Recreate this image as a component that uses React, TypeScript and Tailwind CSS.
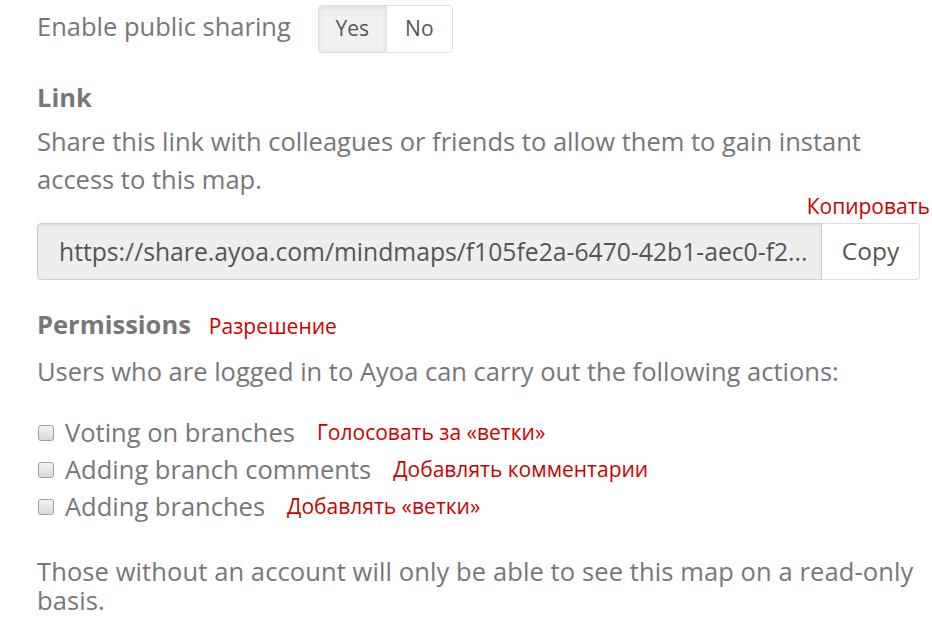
export default function App() {
  const perms = [
    { label: 'Voting on branches', note: 'Голосовать за «ветки»' },
    { label: 'Adding branch comments', note: 'Добавлять комментарии' },
    { label: 'Adding branches', note: 'Добавлять «ветки»' },
  ];

  return (
    <div className="w-[932px] h-[633px] bg-white overflow-hidden text-[#777777] font-['Open_Sans',sans-serif]">
      <div className="pl-[37px] pr-3">
        {/* public sharing toggle */}
        <div className="flex items-center gap-[27px] pt-[5px]">
          <span className="text-[25.5px] leading-none -mt-[4px]">Enable public sharing</span>
          <div className="flex h-[48px] border border-[#dddddd] rounded-[4px] overflow-hidden text-[21px] text-[#555555]">
            <button className="w-[68px] bg-[#f0f0f0] shadow-[inset_0_2px_4px_rgba(0,0,0,0.08)] border-r border-[#e4e4e4]">Yes</button>
            <button className="w-[65px] bg-white">No</button>
          </div>
        </div>

        {/* link */}
        <h3 className="mt-[28px] text-[25.5px] font-bold leading-[32px]">Link</h3>
        <p className="mt-[9px] text-[25.5px] leading-[38px]">
          Share this link with colleagues or friends to allow them to gain instant access to this map.
        </p>
        <div className="flex justify-end -mr-[10px] -mt-[5px]">
          <span className="text-[21px] leading-[26px] text-[#cc0000]">Копировать</span>
        </div>
        <div className="flex h-[57px] w-[883px] mt-[4px]">
          <div className="flex-1 flex items-center px-[21px] bg-[#eeeeee] border border-[#cccccc] rounded-l-[4px] text-[24.7px] text-[#555555] shadow-[inset_0_1px_2px_rgba(0,0,0,0.08)] whitespace-nowrap overflow-hidden">
            https://share.ayoa.com/mindmaps/f105fe2a-6470-42b1-aec0-f2...
          </div>
          <button className="w-[98px] bg-white border border-l-0 border-[#dddddd] rounded-r-[4px] text-[24.5px] text-[#555555]">Copy</button>
        </div>

        {/* permissions */}
        <div className="flex items-baseline gap-[18px] mt-[28px]">
          <h3 className="text-[25.5px] font-bold leading-[32px]">Permissions</h3>
          <span className="text-[21px] text-[#cc0000]">Разрешение</span>
        </div>
        <p className="mt-[12px] text-[25.5px] leading-[32px]">Users who are logged in to Ayoa can carry out the following actions:</p>

        <ul className="mt-[28px] flex flex-col">
          {perms.map((p) => (
            <li key={p.label} className="flex items-center h-[37px]">
              <span className="w-[16px] h-[16px] ml-[1px] mr-[11px] rounded-[3px] border border-[#a0a0a0] bg-gradient-to-b from-[#f4f4f4] to-[#d8d8d8]" />
              <span className="text-[25.5px] leading-none">{p.label}</span>
              <span className="ml-[22px] text-[21px] text-[#cc0000]">{p.note}</span>
            </li>
          ))}
        </ul>

        <p className="mt-[31px] text-[25.5px] leading-[29px] tracking-[0.1px]">
          Those without an account will only be able to see this map on a read-only basis.
        </p>
      </div>
    </div>
  );
}
